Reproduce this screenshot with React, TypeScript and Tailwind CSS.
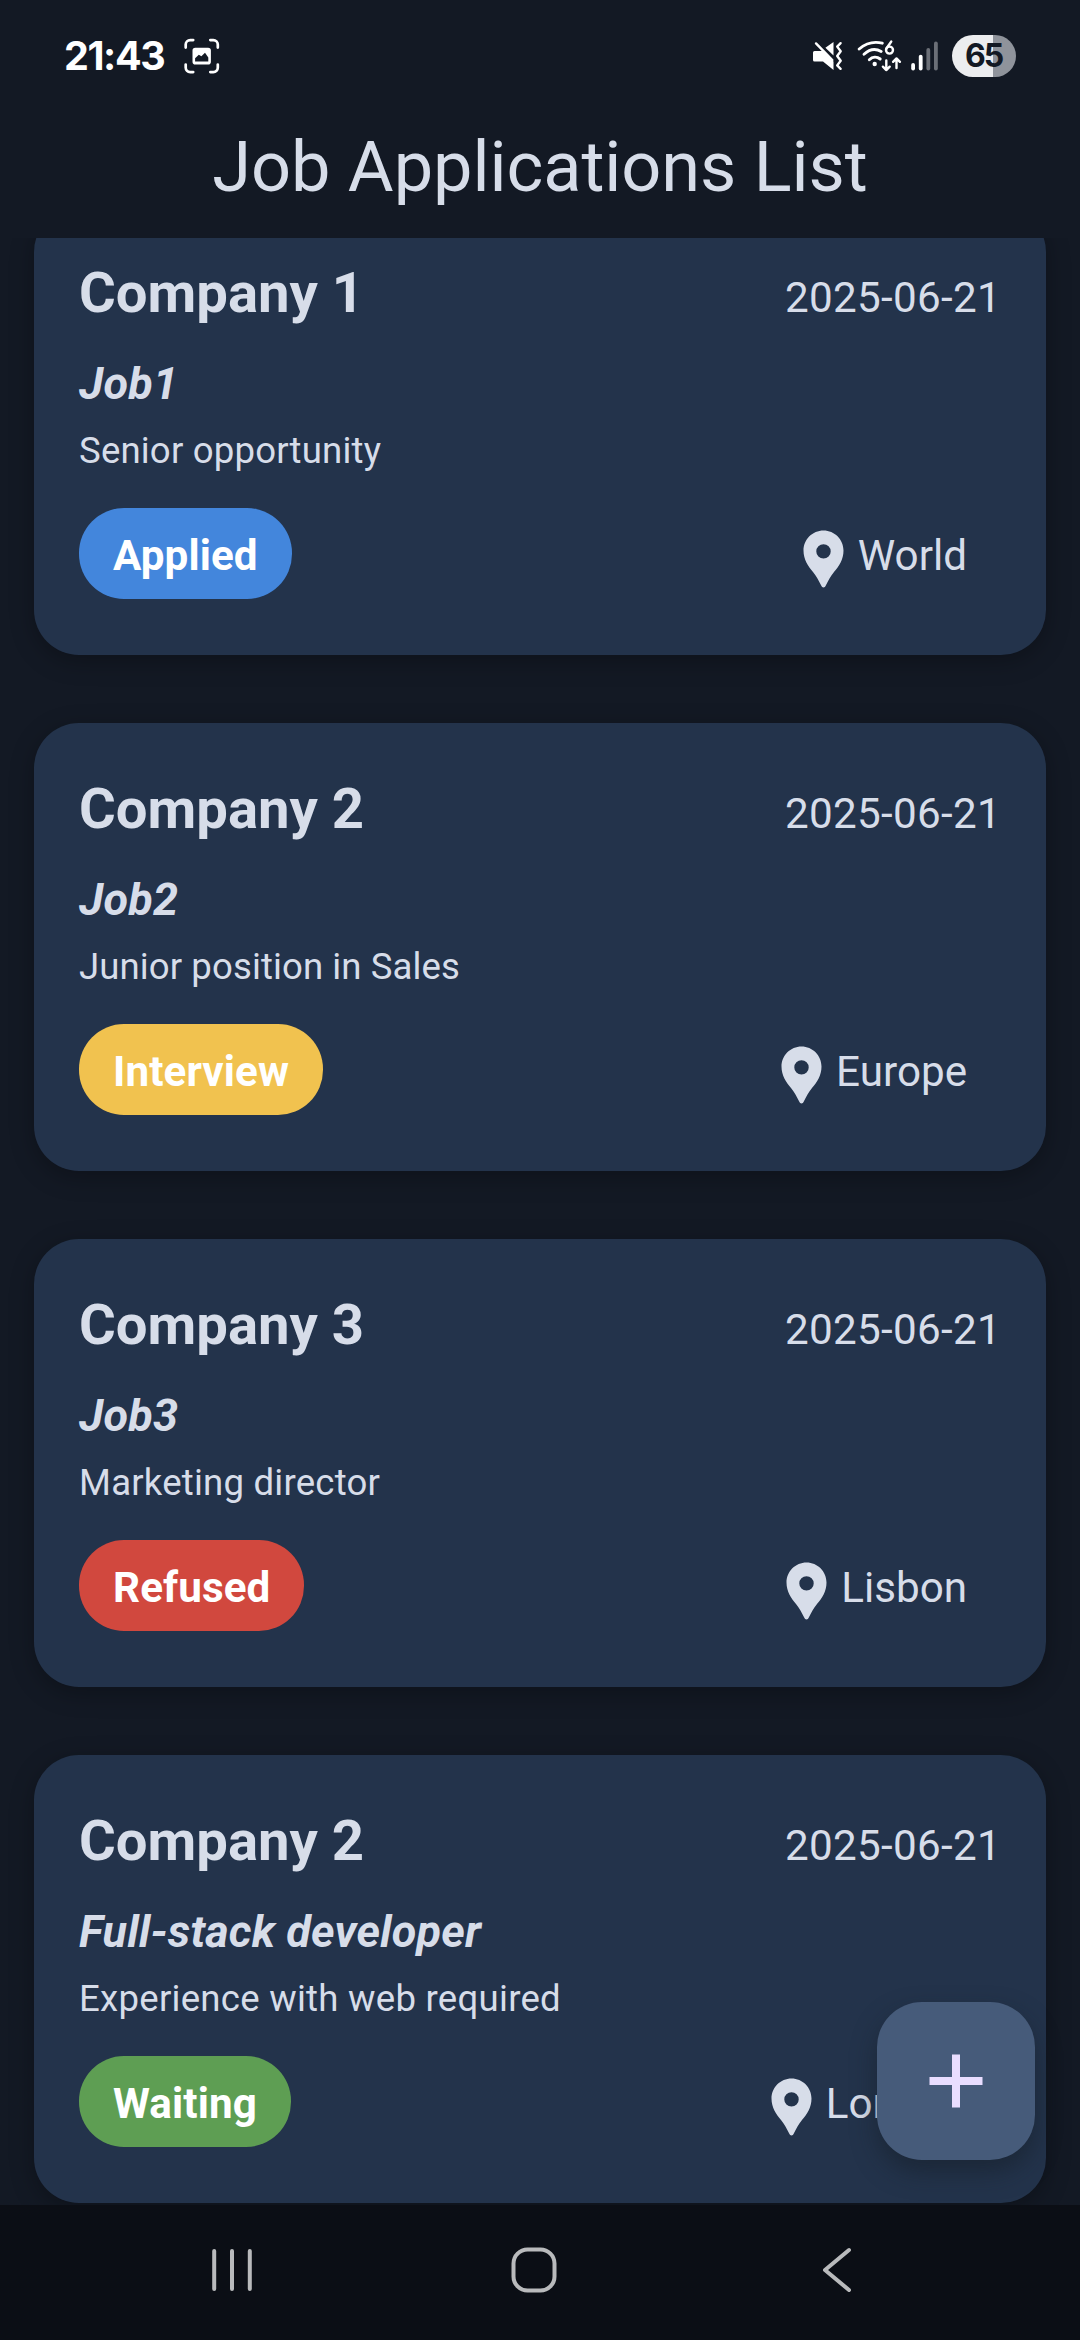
import React from "react";

type Application = {
  company: string;
  date: string;
  job: string;
  description: string;
  descriptionClass: string;
  status: string;
  statusClass: string;
  location: string;
};

const applications: Application[] = [
  {
    company: "Company 1",
    date: "2025-06-21",
    job: "Job1",
    description: "Senior opportunity",
    descriptionClass: "tracking-[0.18px]",
    status: "Applied",
    statusClass: "bg-[#4386dc]",
    location: "World",
  },
  {
    company: "Company 2",
    date: "2025-06-21",
    job: "Job2",
    description: "Junior position in Sales",
    descriptionClass: "tracking-[0.1px]",
    status: "Interview",
    statusClass: "bg-[#f1c24f]",
    location: "Europe",
  },
  {
    company: "Company 3",
    date: "2025-06-21",
    job: "Job3",
    description: "Marketing director",
    descriptionClass: "tracking-[0.22px]",
    status: "Refused",
    statusClass: "bg-[#d1483e]",
    location: "Lisbon",
  },
  {
    company: "Company 2",
    date: "2025-06-21",
    job: "Full-stack developer",
    description: "Experience with web required",
    descriptionClass: "tracking-[0.27px]",
    status: "Waiting",
    statusClass: "bg-[#5e9e53]",
    location: "London",
  },
];

function CaptureIcon() {
  return (
    <svg className="h-[36px] w-[36px]" viewBox="0 0 36 36" fill="none">
      <g stroke="#fff" strokeWidth="2.7" strokeLinecap="round">
        <path d="M1.700 9.600V6.600A4.500 4.500 0 0 1 6.200 2.100H9.200" />
        <path d="M26.300 2.100h3A4.500 4.500 0 0 1 33.800 6.600V9.600" />
        <path d="M33.800 26.600v3a4.500 4.500 0 0 1-4.500 4.500h-3" />
        <path d="M9.200 34.100h-3a4.500 4.500 0 0 1-4.500-4.500v-3" />
      </g>
      <path
        fill="#fff"
        fillRule="evenodd"
        d="M11.300 9.700h12.800a2.800 2.800 0 0 1 2.800 2.800v11.200a2.800 2.800 0 0 1-2.800 2.800H11.300a2.800 2.800 0 0 1-2.800-2.800V12.500a2.800 2.800 0 0 1 2.800-2.800zM11.100 20.200v3.400h13.200v-4l-3.300-4.800-3.600 3.500-2.600-1.500z"
      />
    </svg>
  );
}

function MuteIcon() {
  return (
    <svg className="h-[32px] w-[32px]" viewBox="0 0 32 32" fill="none">
      <path fill="#fff" d="M2.500 11H11l10.500 10.500V30L11 21.400H2.500A1.500 1.500 0 0 1 1 19.900V12.500A1.500 1.500 0 0 1 2.500 11zM21.500 2v13.600L13.400 7.700z" />
      <path stroke="#fff" strokeWidth="2.4" strokeLinecap="round" d="M4 3.400 20.300 20.200" />
      <path
        stroke="#fff"
        strokeWidth="2.400"
        strokeLinecap="round"
        strokeLinejoin="round"
        d="M28.600 3.200 25.200 6.600l3.500 4.700-3.500 4.700 3.500 4.700-3.500 4.700 3.400 3.400"
      />
    </svg>
  );
}

function WifiIcon() {
  return (
    <svg className="h-[34px] w-[46px]" viewBox="0 0 46 34" fill="none">
      <g stroke="#fff" strokeWidth="2.900" strokeLinecap="round">
        <path d="M2.200 10C9.500 3.700 17.500 2.300 25.300 4.200" />
        <path d="M7 15.300c5.300-5 11.500-6 17.200-2.900" />
        <path d="M12.300 20.700c3.200-3.100 7.500-3.400 10.900-.7" />
      </g>
      <circle cx="17.700" cy="25" r="2.200" fill="#fff" />
      <path stroke="#fff" strokeWidth="2.500" strokeLinecap="round" d="M34.200 2.600 29.600 9.200" />
      <circle cx="32.500" cy="11.100" r="3.500" stroke="#fff" strokeWidth="2.400" />
      <g stroke="#fff" strokeWidth="2.400" strokeLinecap="round" strokeLinejoin="round">
        <path d="M29.300 21.500v9.500M25.900 27.700l3.400 3.400 3.400-3.400" />
        <path d="M39.500 29v-9.500M36.100 22.800l3.400-3.400 3.400 3.400" />
      </g>
    </svg>
  );
}

function SignalIcon() {
  return (
    <svg className="h-[30px] w-[28px]" viewBox="0 0 28 30">
      <rect x="0.200" y="22" width="3.800" height="7.500" rx="1.900" fill="#fff" />
      <rect x="7.800" y="13.800" width="3.800" height="15.700" rx="1.900" fill="#fff" />
      <rect x="15.400" y="7" width="3.800" height="22.500" rx="1.900" fill="#6b6f77" />
      <rect x="23" y="0.500" width="3.800" height="29" rx="1.900" fill="#6b6f77" />
    </svg>
  );
}

function PinIcon() {
  return (
    <svg className="h-[58px] w-[41px]" viewBox="0 0 41 58">
      <path
        fill="#d7dde9"
        fillRule="evenodd"
        d="M20.500.500C9.500.500.500 9.400.500 20.500c0 9 4.500 15.500 9.500 21.500 3.500 4.200 5.700 8.500 8.200 13.600.9 2.500 3.700 2.500 4.600 0 2.500-5.100 4.700-9.400 8.200-13.600 5-6 9.500-12.500 9.500-21.500C40.500 9.400 31.500.500 20.500.500zm0 13.700a7.200 7.200 0 1 1 0 14.400 7.200 7.200 0 0 1 0-14.400z"
      />
    </svg>
  );
}

function StatusBar() {
  return (
    <div className="flex h-[112px] shrink-0 items-center pr-[64px] pl-[64px] text-white">
      <span className="w-[120px] font-['Inter'] text-[39.5px] leading-[48px] font-bold tracking-[-1.4px] whitespace-nowrap">21:43</span>
      <CaptureIcon />
      <div className="ml-auto flex items-center">
        <MuteIcon />
        <div className="ml-[13px] flex">
          <WifiIcon />
        </div>
        <div className="ml-[8px] flex">
          <SignalIcon />
        </div>
        <div className="ml-[13px] flex h-[42px] w-[64px] items-center justify-center rounded-full bg-[linear-gradient(90deg,#ecedef_41px,#8f939b_41px)] pr-px font-['Inter'] text-[32px] leading-[42px] font-bold tracking-[-2px] text-[#131924]">
          65
        </div>
      </div>
    </div>
  );
}

function ApplicationCard({ item }: { item: Application }) {
  return (
    <article className="flex h-[448px] shrink-0 flex-col rounded-[45px] bg-[#23334b] px-[45px] pt-[53px] shadow-[0_6px_24px_rgba(0,0,0,0.28)]">
      <div className="flex items-baseline justify-between">
        <h2 className="text-[56.25px] leading-[66px] font-bold">{item.company}</h2>
        <span className="text-[42.19px] leading-[50px] tracking-[0.3px]">{item.date}</span>
      </div>
      <p className="mt-[32px] text-[45px] leading-[52px] font-bold tracking-[0.13px] italic">{item.job}</p>
      <p className={`mt-[19px] text-[36.56px] leading-[44px] ${item.descriptionClass}`}>{item.description}</p>
      <div className="mt-[35px] flex h-[91px] items-center justify-between pr-[34px]">
        <span className={`flex h-[91px] items-center rounded-[45px] px-[34px] pt-[5px] text-[42.19px] font-bold tracking-[0.1px] text-white ${item.statusClass}`}>
          {item.status}
        </span>
        <span className="flex items-center gap-[14px]">
          <span className="mt-[10px]">
            <PinIcon />
          </span>
          <span className="mt-[5px] text-[42.19px] leading-[50px]">{item.location}</span>
        </span>
      </div>
    </article>
  );
}

function NavigationBar() {
  return (
    <nav className="flex h-[135px] shrink-0 items-center bg-[#0b0e15] pb-[5px] pl-[211px]">
      <svg className="h-[46px] w-[42px]" viewBox="0 0 42 46" stroke="#b9babc" strokeWidth="4" strokeLinecap="round">
        <path d="M3.200 4v38M21 4v38M38.800 4v38" />
      </svg>
      <svg className="ml-[258px] h-[46px] w-[46px]" viewBox="0 0 46 46" fill="none" stroke="#b9babc" strokeWidth="4">
        <rect x="2.500" y="2.500" width="41" height="41" rx="14" />
      </svg>
      <svg className="ml-[265px] h-[46px] w-[30px]" viewBox="0 0 30 46" fill="none" stroke="#b9babc" strokeWidth="4" strokeLinecap="round" strokeLinejoin="round">
        <path d="M27 3 3 23l24 20" />
      </svg>
    </nav>
  );
}

export default function App() {
  return (
    <div className="relative flex h-[2340px] w-[1080px] flex-col overflow-hidden bg-[#131924] font-['Roboto',sans-serif] text-[#d7dde9]">
      <StatusBar />
      <header className="flex h-[126px] shrink-0 justify-center pt-[14px]">
        <h1 className="text-[70.3px] leading-[82px] tracking-[-0.07px]">Job Applications List</h1>
      </header>
      <main className="flex h-[1967px] shrink-0 flex-col overflow-hidden px-[34px]">
        <div className="-mt-[31px] flex flex-col gap-[68px]">
          {applications.map((item, i) => (
            <ApplicationCard key={i} item={item} />
          ))}
        </div>
      </main>
      <NavigationBar />
      <button
        aria-label="Add application"
        className="absolute top-[2002px] left-[877px] flex h-[158px] w-[158px] items-center justify-center rounded-[45px] bg-[#465b7a] shadow-[0_12px_24px_rgba(20,28,36,0.5)]"
      >
        <svg className="h-[54px] w-[54px]" viewBox="0 0 54 54" fill="#e9ddff">
          <path d="M23 .500h8v22.500h22.500v8H31v22.500h-8V31H.500v-8H23z" />
        </svg>
      </button>
    </div>
  );
}
